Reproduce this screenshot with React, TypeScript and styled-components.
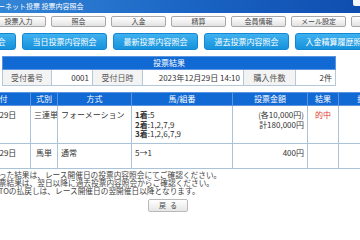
import styled, { createGlobalStyle } from "styled-components";

const GlobalStyle = createGlobalStyle`
  html, body {
    margin: 0;
    padding: 0;
    background: #ffffff;
    overflow: hidden;
  }
  body {
    font-family: "Noto Sans CJK JP", "Noto Sans", sans-serif;
    color: #333333;
  }
`;

// the page is wider than the window and sits scrolled a little to the right
const Page = styled.div`
  width: 480px;
  margin-left: -72px;
  display: flex;
  flex-direction: column;
`;

const Header = styled.div`
  height: 13px;
  display: flex;
  justify-content: space-between;
  align-items: flex-start;
  padding-left: 49px;
  background: linear-gradient(to right, #3d93de, #1a64c4 55%, #0b47a8);
`;

const Title = styled.div`
  color: #ffffff;
  font-size: 7px;
  line-height: 13px;
  white-space: nowrap;
`;

const LogoutTab = styled.div`
  width: 40px;
  height: 6px;
  margin-right: 15px;
  background: #f4f6fa;
  border-radius: 0 0 2px 2px;
  font-size: 5px;
  line-height: 6px;
  text-align: center;
  color: #333;
  overflow: hidden;
`;

const Nav = styled.div`
  display: flex;
  gap: 5px;
  margin-top: 3px;
  padding-left: 3px;
`;

const NavButton = styled.div`
  flex: 0 0 auto;
  width: 55px;
  height: 11px;
  box-sizing: border-box;
  border: 1px solid #a8a8a8;
  border-radius: 2px;
  background: linear-gradient(#ffffff, #e2e2e2);
  font-size: 7px;
  line-height: 9px;
  text-align: center;
  color: #444;
  white-space: nowrap;
`;

const ActionRow = styled.div`
  display: flex;
  gap: 6px;
  margin-top: 6px;
  padding-left: 3px;
`;

const ActionButton = styled.div`
  flex: 0 0 auto;
  width: 85px;
  height: 17px;
  box-sizing: border-box;
  border: 1px solid #1487d2;
  border-radius: 3px;
  background: linear-gradient(#3fb1f0, #1692dc);
  color: #ffffff;
  font-size: 8px;
  line-height: 15px;
  text-align: center;
  white-space: nowrap;
`;

const ResultTable = styled.table`
  width: 333px;
  margin: 6px 0 0 74px;
  border-collapse: collapse;
  table-layout: fixed;
  font-size: 8px;
`;

const BlueHead = styled.th<{ w?: number }>`
  width: ${(p) => (p.w ? `${p.w}px` : "auto")};
  height: 12px;
  padding: 0;
  background: #1169d4;
  color: #ffffff;
  font-weight: normal;
  font-size: 8px;
  line-height: 12px;
  border: 1px solid #5b94df;
  white-space: nowrap;
  overflow: hidden;
`;

const InfoCell = styled.td<{ label?: boolean }>`
  height: 15px;
  padding: 0 3px;
  border: 1px solid #b4c8da;
  background: ${(p) => (p.label ? "#f3f3f3" : "#ffffff")};
  color: ${(p) => (p.label ? "#555" : "#333")};
  text-align: ${(p) => (p.label ? "center" : "right")};
  line-height: 13px;
  white-space: nowrap;
  overflow: hidden;
`;

const MainTable = styled.table`
  width: 400px;
  margin: 6px 0 0 40px;
  border-collapse: collapse;
  table-layout: fixed;
  font-size: 8px;
`;

const Cell = styled.td<{ align?: string; h?: number; red?: boolean }>`
  height: ${(p) => (p.h ? `${p.h}px` : "auto")};
  padding: 4px 3px 0;
  box-sizing: border-box;
  border: 1px solid #a9c3da;
  vertical-align: top;
  text-align: ${(p) => p.align || "left"};
  line-height: 9.5px;
  color: ${(p) => (p.red ? "#e23a2e" : "#333")};
  white-space: nowrap;
  overflow: hidden;
`;

const Place = styled.b`
  font-weight: bold;
`;

const Notes = styled.div`
  margin: 2px 0 0 40px;
  font-size: 7.7px;
  line-height: 8.2px;
  color: #444;
  white-space: nowrap;
`;

const BackButton = styled.div`
  align-self: center;
  width: 40px;
  height: 13px;
  margin-top: 3px;
  box-sizing: border-box;
  border: 1px solid #b9b9b9;
  border-radius: 2px;
  background: linear-gradient(#ffffff, #e6e6e6);
  font-size: 7px;
  line-height: 11px;
  letter-spacing: 4px;
  text-indent: 4px;
  text-align: center;
  color: #444;
`;

const navItems = ["トップ", "投票入力", "照会", "入金", "精算", "会員情報", "メール設定", "変更"];
const actions = [
  "前日投票内容照会",
  "当日投票内容照会",
  "最新投票内容照会",
  "過去投票内容照会",
  "入金精算履歴照会",
];
const infoCols = [49, 41, 50, 101, 52, 40];

const App = () => {
  return (
    <Page>
      <GlobalStyle />
      <Header>
        <Title>インターネット投票 投票内容照会</Title>
        <LogoutTab>ログアウト</LogoutTab>
      </Header>
      <Nav>
        {navItems.map((n) => (
          <NavButton key={n}>{n}</NavButton>
        ))}
      </Nav>
      <ActionRow>
        {actions.map((a) => (
          <ActionButton key={a}>{a}</ActionButton>
        ))}
      </ActionRow>

      <ResultTable>
        <colgroup>
          {infoCols.map((w, i) => (
            <col key={i} width={w} />
          ))}
        </colgroup>
        <thead>
          <tr>
            <BlueHead colSpan={6}>投票結果</BlueHead>
          </tr>
        </thead>
        <tbody>
          <tr>
            <InfoCell label>受付番号</InfoCell>
            <InfoCell>0001</InfoCell>
            <InfoCell label>受付日時</InfoCell>
            <InfoCell>2023年12月29日 14:10</InfoCell>
            <InfoCell label>購入件数</InfoCell>
            <InfoCell>2件</InfoCell>
          </tr>
        </tbody>
      </ResultTable>

      <MainTable>
        <thead>
          <tr>
            <BlueHead w={61}>日付</BlueHead>
            <BlueHead w={26}>式別</BlueHead>
            <BlueHead w={73}>方式</BlueHead>
            <BlueHead w={100}>馬/組番</BlueHead>
            <BlueHead w={74}>投票金額</BlueHead>
            <BlueHead w={30}>結果</BlueHead>
            <BlueHead w={68}>払戻金額</BlueHead>
          </tr>
        </thead>
        <tbody>
          <tr>
            <Cell align="center" h={38}>12月29日</Cell>
            <Cell align="center">三連単</Cell>
            <Cell>フォーメーション</Cell>
            <Cell>
              <Place>1着</Place>:5
              <br />
              <Place>2着</Place>:1,2,7,9
              <br />
              <Place>3着</Place>:1,2,6,7,9
            </Cell>
            <Cell align="right">
              (各10,000円)
              <br />
              計180,000円
            </Cell>
            <Cell align="center" red>
              的中
            </Cell>
            <Cell align="right">356,920円</Cell>
          </tr>
          <tr>
            <Cell align="center" h={25}>12月29日</Cell>
            <Cell align="center">馬単</Cell>
            <Cell>通常</Cell>
            <Cell>5→1</Cell>
            <Cell align="right">400円</Cell>
            <Cell />
            <Cell />
          </tr>
        </tbody>
      </MainTable>

      <Notes>
        ※本日行った結果は、レース開催日の投票内容照会にてご確認ください。
        <br />
        ※前日投票結果は、翌日以降に過去投票内容照会からご確認ください。
        <br />
        ※当日のTOの払戻しは、レース開催日の翌開催日以降となります。
      </Notes>
      <BackButton>戻る</BackButton>
    </Page>
  );
};

export default App;
